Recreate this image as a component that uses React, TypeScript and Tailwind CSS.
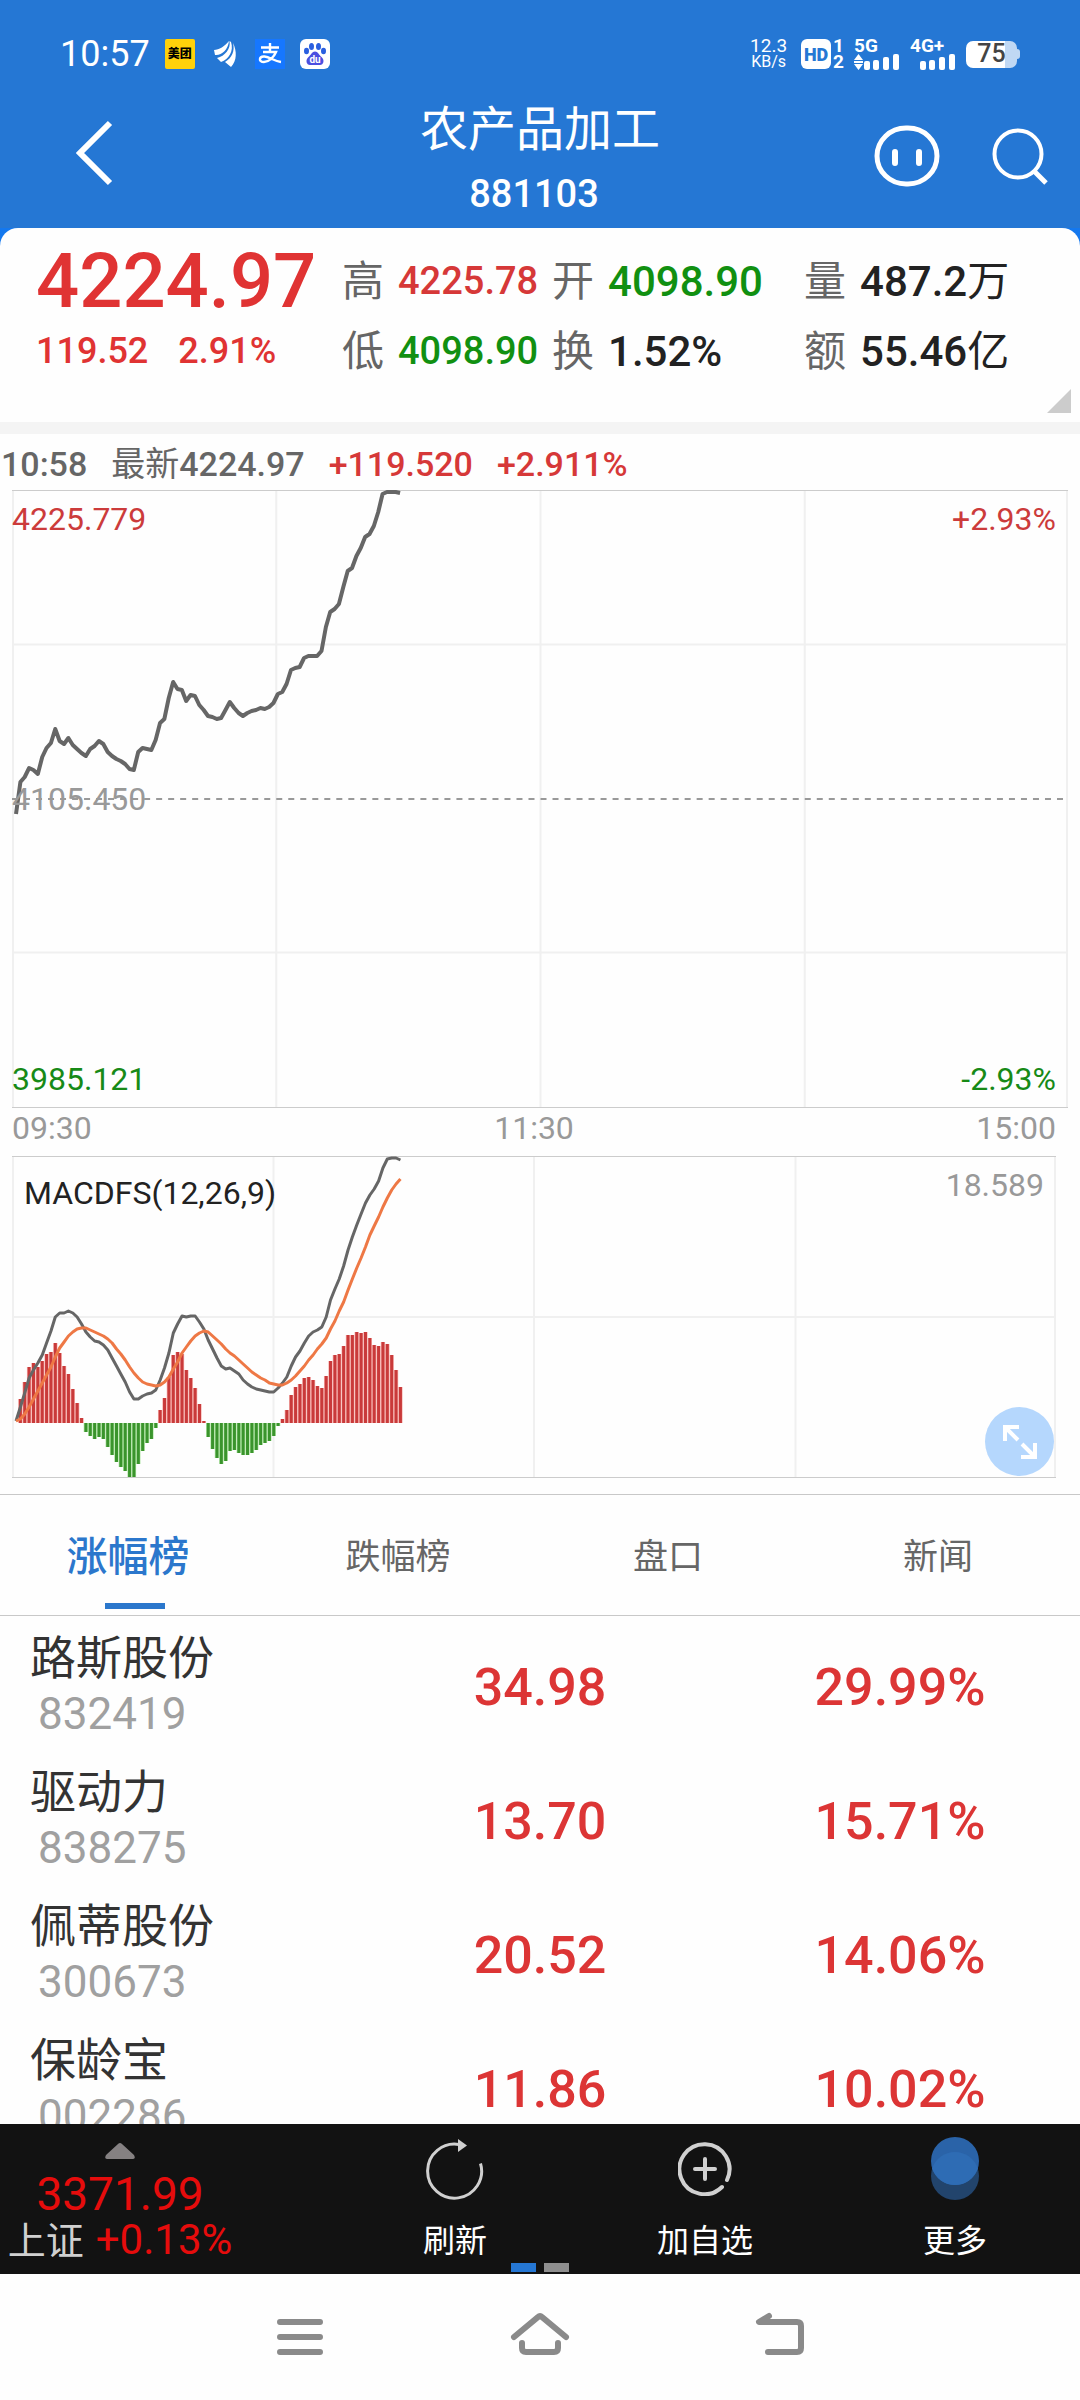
import clsx from "clsx";
import type { ReactNode } from "react";

type Stock = { name: string; code: string; price: string; change: string };

const STOCKS: Stock[] = [
  { name: "路斯股份", code: "832419", price: "34.98", change: "29.99%" },
  { name: "驱动力", code: "838275", price: "13.70", change: "15.71%" },
  { name: "佩蒂股份", code: "300673", price: "20.52", change: "14.06%" },
  { name: "保龄宝", code: "002286", price: "11.86", change: "10.02%" },
];

const TABS = ["涨幅榜", "跌幅榜", "盘口", "新闻"];

// one value per minute since the open, in plot units from the top
const PRICE = [
  324, 292, 287, 278, 280, 284, 267, 258, 253, 239, 251, 254, 248, 255, 259, 263, 266, 259, 256, 251,
  254, 262, 266, 269, 271, 274, 279, 280, 262, 258, 259, 260, 250, 233, 229, 208, 192, 199, 200, 211,
  205, 206, 215, 220, 226, 227, 229, 228, 220, 212, 218, 223, 226, 223, 221, 220, 218, 219, 217, 213,
  204, 202, 194, 180, 178, 177, 168, 166, 166, 166, 161, 137, 122, 119, 114, 97, 81, 78, 66, 58,
  47, 44, 36, 22, 4, 2, 2, 2, 3,
];

const DIF = [
  265, 251, 237, 222, 214, 207, 199, 187, 175, 161, 157, 157, 155, 157, 161, 168, 176, 181, 185, 186,
  189, 194, 202, 210, 218, 226, 236, 243, 243, 240, 238, 237, 234, 224, 212, 197, 177, 168, 160, 161,
  160, 160, 166, 173, 184, 193, 202, 210, 213, 212, 215, 218, 224, 228, 231, 233, 234, 235, 236, 236,
  232, 227, 221, 210, 201, 195, 187, 180, 176, 174, 171, 161, 144, 133, 123, 110, 94, 81, 69, 58,
  47, 39, 33, 25, 12, 3, 2, 2, 4,
];

const DEA = [
  265, 263, 258, 251, 243, 235, 227, 219, 211, 201, 192, 186, 180, 176, 173, 172, 172, 174, 176, 178,
  180, 183, 187, 193, 198, 204, 211, 217, 222, 226, 228, 229, 230, 229, 226, 221, 213, 206, 197, 191,
  185, 180, 177, 175, 176, 180, 184, 188, 193, 197, 200, 204, 208, 212, 216, 219, 222, 224, 227, 228,
  229, 229, 227, 224, 220, 215, 210, 204, 199, 193, 188, 182, 173, 165, 155, 146, 134, 123, 112, 102,
  91, 79, 70, 61, 51, 42, 34, 28, 23,
];

const BARS = [
  0, 24, 41, 56, 60, 56, 62, 69, 71, 80, 70, 57, 49, 34, 20, 5, -9, -13, -16, -14,
  -16, -24, -32, -39, -44, -48, -54, -54, -41, -28, -20, -16, -5, 13, 25, 46, 68, 71, 69, 53,
  45, 35, 19, 2, -14, -26, -35, -41, -38, -28, -27, -30, -32, -32, -30, -27, -22, -20, -18, -13,
  -3, 4, 13, 28, 36, 39, 45, 46, 43, 37, 35, 47, 62, 68, 69, 77, 88, 88, 91, 90,
  91, 85, 78, 77, 81, 79, 68, 53, 36,
];

const STEP = 4.36;
const MACD_ZERO = 267;

const xAt = (i: number) => 4 + i * STEP;
const toPoints = (values: number[]) => values.map((y, i) => `${xAt(i).toFixed(1)},${y}`).join(" ");

export default function App() {
  return (
    <div className="flex h-screen flex-col overflow-hidden bg-[#fefefe] font-[Roboto,'Noto_Sans_CJK_SC',sans-serif] text-[#222]">
      <header className="bg-[#2577d4] text-white">
        <StatusBar />
        <TitleBar />
      </header>
      <QuotePanel />
      <TickLine />
      <PriceChart />
      <MacdChart />
      <RankTabs />
      <StockList />
      <BottomBar />
      <NavBar />
    </div>
  );
}

function StatusBar() {
  return (
    <div className="flex h-[92px] items-center justify-between pt-4 pr-[60px] pl-[60px]">
      <div className="flex items-center">
        <span className="mr-[15px] text-[36px] leading-[40px]">10:57</span>
        <span className="mr-[18px] flex h-[30px] w-[30px] items-center justify-center rounded-[2px] bg-[#ffd10a] text-[12px] font-black whitespace-nowrap text-black">
          美团
        </span>
        <svg className="mr-[18px] h-[26px] w-[24px]" viewBox="0 0 24 26" fill="#fff">
          <path d="M1 9C6 9 12 5 16 0C15 9 8 15 2 14Z" />
          <path d="M16.500 0C18 8 12 15 4 17L8 21C16 18 21 10 18 1Z" />
          <path d="M20 2C22 10 19 17 12 21L18 26C24 20 24 10 20 2Z" />
        </svg>
        <span className="mr-[15px] flex h-[30px] w-[30px] items-center justify-center bg-[#1677ff]">
          <svg className="h-[24px] w-[24px]" viewBox="0 0 24 24" fill="none" stroke="#fff" strokeWidth="2.4">
            <path d="M3 5.500H21M12 1V9.500M5 10H18C16 15 11 20 6 20C0 20 1 14 6.500 14.500C12 15 16 19 23 20" />
          </svg>
        </span>
        <span className="flex h-[30px] w-[30px] items-center justify-center rounded-md bg-white">
          <BaiduPaw />
        </span>
      </div>
      <div className="flex items-center">
        <div className="mr-[14px] text-center leading-[16px]">
          <div className="text-[19px]">12.3</div>
          <div className="text-[16px]">KB/s</div>
        </div>
        <span className="flex h-[30px] w-[30px] items-center justify-center rounded-[6px] bg-white text-[18px] font-black text-[#2577d4]">
          HD
        </span>
        <div className="mr-[10px] ml-[2px] text-[19px] leading-[16px] font-bold">
          <div>1</div>
          <div>2</div>
        </div>
        <Signal label="5G" data />
        <Signal label="4G+" />
        <div className="flex items-center">
          <div className="flex h-[27px] w-[51px] items-center justify-center rounded-[7px] bg-[linear-gradient(90deg,#fff_76%,#c0d8f4_76%)] text-[25px] font-medium text-[#444]">
            75
          </div>
          <div className="h-[10px] w-[3px] rounded-r-sm bg-[#c0d8f4]" />
        </div>
      </div>
    </div>
  );
}

function Signal({ label, data }: { label: string; data?: boolean }) {
  return (
    <div className="mr-[11px] w-[45px]">
      <div className="h-[14px] text-[19px] leading-[14px] font-bold">{label}</div>
      <svg className="h-[17px] w-[45px]" viewBox="0 0 45 17" fill="#fff">
        {data && <path d="M0 7L4.500 1L9 7ZM0 11L4.500 17L9 11ZM0 8H9V10H0Z" />}
        <rect x="10" y="8" width="6" height="9" rx="2" />
        <rect x="19" y="7" width="6" height="10" rx="2" />
        <rect x="29" y="4" width="6" height="13" rx="2" />
        <rect x="39" y="1" width="6" height="16" rx="2" />
      </svg>
    </div>
  );
}

function BaiduPaw() {
  return (
    <svg className="h-[24px] w-[24px]" viewBox="0 0 24 24">
      <g fill="#2a5fe0">
        <ellipse cx="3.500" cy="9" rx="2.500" ry="3.200" />
        <ellipse cx="8.500" cy="4.500" rx="2.500" ry="3.500" />
        <ellipse cx="15.500" cy="4.500" rx="2.500" ry="3.500" />
        <ellipse cx="20.500" cy="9" rx="2.500" ry="3.200" />
      </g>
      <path d="M12 9.500C15 9.500 16 13 18.500 15C22 18 20.500 23 17 23H7C3.500 23 2 18 5.500 15C8 13 9 9.500 12 9.500Z" fill="#4b4fe0" />
      <text x="12" y="21" textAnchor="middle" fill="#fff" className="text-[10px] font-bold">
        du
      </text>
    </svg>
  );
}

function TitleBar() {
  return (
    <div className="grid h-[136px] grid-cols-[1fr_auto_1fr]">
      <button type="button" aria-label="返回" className="justify-self-start pb-[14px] pl-[76px]">
        <svg className="h-[66px] w-[38px]" viewBox="0 0 38 66" fill="none" stroke="#fff" strokeWidth="6">
          <path d="M34 3L4 33L34 63" />
        </svg>
      </button>
      <div className="flex flex-col items-center pt-[6px]">
        <h1 className="text-[48px] leading-[64px]">农产品加工</h1>
        <p className="pr-3 text-[38px] leading-[64px] font-medium">881103</p>
      </div>
      <div className="flex items-center justify-end gap-[52px] pr-8 pb-2">
        <button type="button" aria-label="智能助手">
          <svg className="h-[62px] w-[66px]" viewBox="0 0 66 62" fill="none" stroke="#fff" strokeWidth="5">
            <rect x="3" y="3" width="60" height="56" rx="29" />
            <path d="M21 27V38M45 27V38" strokeWidth="6" strokeLinecap="round" />
          </svg>
        </button>
        <button type="button" aria-label="搜索">
          <svg className="h-[58px] w-[56px]" viewBox="0 0 56 58" fill="none" stroke="#fff" strokeWidth="4">
            <circle cx="26" cy="27" r="23.500" />
            <path d="M42 44L54 56" strokeWidth="5" />
          </svg>
        </button>
      </div>
    </div>
  );
}

function QuoteItem({ label, className, children }: { label: string; className: string; children: ReactNode }) {
  return (
    <div className="flex h-[70px] items-center gap-[14px] whitespace-nowrap">
      <dt className="text-[42px] text-[#666]">{label}</dt>
      <dd className={clsx("font-medium", className)}>{children}</dd>
    </div>
  );
}

function QuotePanel() {
  return (
    <section className="bg-[#1478ee]">
      <div className="relative rounded-t-[18px] bg-[#fefefe] pt-[18px] pb-[36px]">
        <div className="grid grid-cols-[306fr_210fr_252fr_276fr] pl-[36px]">
          <div className="text-[#e03333]">
            <div className="flex h-[70px] items-center text-[76px] font-medium">4224.97</div>
            <div className="flex h-[70px] items-center gap-[30px] text-[36px] font-medium">
              <span>119.52</span>
              <span>2.91%</span>
            </div>
          </div>
          <dl>
            <QuoteItem label="高" className="text-[38px] text-[#d63838]">4225.78</QuoteItem>
            <QuoteItem label="低" className="text-[38px] text-[#119011]">4098.90</QuoteItem>
          </dl>
          <dl>
            <QuoteItem label="开" className="text-[42px] text-[#119011]">4098.90</QuoteItem>
            <QuoteItem label="换" className="text-[42px]">1.52%</QuoteItem>
          </dl>
          <dl>
            <QuoteItem label="量" className="text-[42px]">
              487.2<span className="font-normal">万</span>
            </QuoteItem>
            <QuoteItem label="额" className="text-[42px]">
              55.46<span className="font-normal">亿</span>
            </QuoteItem>
          </dl>
        </div>
        <div className="absolute right-[9px] bottom-[9px] h-6 w-6 bg-[#ccc] [clip-path:polygon(100%_0,100%_100%,0_100%)]" />
      </div>
      <div className="h-3 bg-[#f4f4f4]" />
    </section>
  );
}

function TickLine() {
  return (
    <div className="flex h-14 shrink-0 items-center gap-6 pt-1 pl-px text-[34px] font-medium whitespace-nowrap text-[#666]">
      <span>10:58</span>
      <span>
        <span className="font-normal">最新</span>4224.97
      </span>
      <span className="text-[#d63838]">+119.520</span>
      <span className="text-[#d63838]">+2.911%</span>
    </div>
  );
}

function PriceChart() {
  return (
    <section className="pr-3 pl-3">
      <div className="relative h-[618px]">
        <svg className="h-full w-full" viewBox="0 0 1055 618" preserveAspectRatio="none" fill="none">
          <path d="M1 0V618M264 0V618M528 0V618M792 0V618M1054 0V618M0 154.500H1055M0 462.500H1055" stroke="#f0f0f0" strokeWidth="2" />
          <path d="M0 0.500H1055M0 617.500H1055" stroke="#ccc" />
          <polyline points={toPoints(PRICE)} stroke="#666" strokeWidth="4" strokeLinejoin="round" />
          <path d="M0 309H1055" stroke="#999" strokeWidth="2" strokeDasharray="6 6" />
        </svg>
        <div className="absolute inset-0 flex flex-col justify-between text-[32px] leading-[58px]">
          <div className="flex justify-between pr-3 text-[#cc3b3b]">
            <span>4225.779</span>
            <span>+2.93%</span>
          </div>
          <div className="text-[#999]">4105.450</div>
          <div className="flex justify-between pr-3 text-[#178a17]">
            <span>3985.121</span>
            <span>-2.93%</span>
          </div>
        </div>
      </div>
      <div className="flex justify-between pr-3 pb-2 text-[32px] leading-[40px] text-[#999]">
        <span>09:30</span>
        <span>11:30</span>
        <span>15:00</span>
      </div>
    </section>
  );
}

function MacdChart() {
  return (
    <section className="pr-6 pb-4 pl-3">
      <div className="relative h-[322px]">
        <svg className="h-full w-full" viewBox="0 0 1042 322" preserveAspectRatio="none" fill="none">
          <path d="M1 0V322M261 0V322M521 0V322M782 0V322M1041 0V322M0 161H1042" stroke="#f0f0f0" strokeWidth="2" />
          <path d="M0 0.500H1042M0 321.500H1042" stroke="#ccc" />
          {BARS.map((value, i) => (
            <g key={i}>
              <rect
                x={xAt(i) - 2.2}
                y={value > 0 ? MACD_ZERO - value : MACD_ZERO}
                width={STEP}
                height={Math.abs(value)}
                fill={value > 0 ? "#f6b4b0" : "#b4e6a8"}
              />
              <rect
                x={xAt(i) - 1.5}
                y={value > 0 ? MACD_ZERO - value : MACD_ZERO}
                width="3"
                height={Math.abs(value)}
                fill={value > 0 ? "#c93a3a" : "#3a942c"}
              />
            </g>
          ))}
          <polyline points={toPoints(DIF)} stroke="#666" strokeWidth="3" strokeLinejoin="round" />
          <polyline points={toPoints(DEA)} stroke="#ee7845" strokeWidth="3" strokeLinejoin="round" />
        </svg>
        <div className="absolute inset-x-0 top-0 flex justify-between pr-3 pl-3 text-[32px]">
          <span className="pt-2 leading-[58px]">MACDFS(12,26,9)</span>
          <span className="leading-[58px] text-[#999]">18.589</span>
        </div>
        <button
          type="button"
          aria-label="全屏"
          className="absolute right-[2px] bottom-[2px] flex h-[69px] w-[69px] items-center justify-center rounded-full bg-[#b5d7fd]"
        >
          <svg className="h-[36px] w-[36px]" viewBox="0 0 36 36" fill="none" stroke="#fff" strokeWidth="4">
            <path d="M17 3H3V17M3 3L16 16M33 19V33H19M20 20L33 33" />
          </svg>
        </button>
      </div>
    </section>
  );
}

function RankTabs() {
  return (
    <div role="tablist" className="grid h-[122px] shrink-0 grid-cols-4 border-y border-[#c8c8c8]">
      {TABS.map((tab, i) => (
        <button
          key={tab}
          type="button"
          role="tab"
          aria-selected={i === 0}
          className={clsx(
            "relative pt-[6px] pr-[14px]",
            i === 0 ? "text-[41px] font-medium text-[#2b77cc]" : "text-[35px] text-[#666]",
          )}
        >
          {tab}
          {i === 0 && <span className="absolute bottom-[6px] left-1/2 h-[6px] w-[60px] -translate-x-1/2 bg-[#2b77cc]" />}
        </button>
      ))}
    </div>
  );
}

function StockList() {
  return (
    <div className="min-h-0 flex-1 overflow-hidden pt-[3px]">
      <table className="w-full table-fixed">
        <tbody>
          {STOCKS.map((stock) => (
            <tr key={stock.code} className="h-[134px]">
              <th scope="row" className="pl-[30px] text-left font-normal">
                <div className="text-[46px] leading-[56px] text-[#333]">{stock.name}</div>
                <div className="pl-2 text-[44px] leading-[56px] text-[#a0a0a0]">{stock.code}</div>
              </th>
              <td className="pt-1 text-center text-[52px] font-medium text-[#dc3535]">{stock.price}</td>
              <td className="pt-1 text-center text-[52px] font-medium text-[#dc3535]">{stock.change}</td>
            </tr>
          ))}
        </tbody>
      </table>
    </div>
  );
}

function ToolButton({ label, children }: { label: string; children: ReactNode }) {
  return (
    <button type="button" className="flex flex-col items-center pt-3 text-[32px] text-white">
      <span className="flex h-[66px] items-center">{children}</span>
      <span className="mt-[15px] leading-[48px]">{label}</span>
    </button>
  );
}

function BottomBar() {
  return (
    <div className="relative grid h-[150px] shrink-0 grid-cols-[330fr_250fr_250fr_250fr] bg-[#121212]">
      <button type="button" className="flex w-[240px] flex-col items-center pt-[19px] whitespace-nowrap text-[#e60c0c]">
        <svg className="h-[16px] w-[30px]" viewBox="0 0 30 16" fill="#858182">
          <path d="M13 1Q15 -1 17 1L29 12Q31 16 28 16H2Q-1 16 1 12Z" />
        </svg>
        <span className="mt-[11px] text-[46px] leading-[48px]">3371.99</span>
        <span className="text-[42px] leading-[44px]">
          <span className="mr-3 text-[38px] text-[#d0d0d0]">上证</span>
          +0.13%
        </span>
      </button>
      <ToolButton label="刷新">
        <svg className="h-[62px] w-[58px]" viewBox="0 0 58 62" fill="none" stroke="#d0d0d0" strokeWidth="3">
          <path d="M54.500 25.500A27 27 0 1 1 33 6.500" />
          <path d="M32 1L41 7.500L32 14Z" fill="#d0d0d0" stroke="none" />
        </svg>
      </ToolButton>
      <ToolButton label="加自选">
        <svg className="h-[54px] w-[54px]" viewBox="0 0 54 54" fill="none" stroke="#d0d0d0" strokeWidth="4" strokeLinecap="round">
          <path d="M49 38A25 25 0 1 0 44 45" />
          <path d="M27 17V37M17 27H37" />
        </svg>
      </ToolButton>
      <ToolButton label="更多">
        <svg className="h-[64px] w-[48px]" viewBox="0 0 48 64">
          <circle cx="24" cy="39" r="24" fill="#22446c" />
          <circle cx="24" cy="24" r="24" fill="#2a63a8" />
          <path d="M1.200 31.500A24 24 0 0 1 46.800 31.500A24 24 0 0 1 1.200 31.500Z" fill="#2e6cb4" />
        </svg>
      </ToolButton>
      <div className="absolute bottom-[2px] left-1/2 flex -translate-x-1/2 gap-2">
        <span className="h-[9px] w-[25px] bg-[#2577d4]" />
        <span className="h-[9px] w-[25px] bg-[#8f8f8f]" />
      </div>
    </div>
  );
}

function NavBar() {
  return (
    <nav className="mx-auto grid h-[126px] w-2/3 shrink-0 grid-cols-3">
      <button type="button" aria-label="最近任务" className="flex items-center justify-center">
        <svg className="h-[44px] w-[46px]" viewBox="0 0 46 44" stroke="#8a8a8a" strokeWidth="6" strokeLinecap="round">
          <path d="M3 7H43M3 22H43M3 37H43" />
        </svg>
      </button>
      <button type="button" aria-label="主屏幕" className="flex items-center justify-center">
        <svg className="h-[50px] w-[60px]" viewBox="0 0 60 50" fill="none" stroke="#8a8a8a" strokeWidth="6" strokeLinecap="round">
          <path d="M4 25L28 5Q30 3 32 5L56 25M12 31V36Q12 40 16 40H44Q48 40 48 36V31" />
        </svg>
      </button>
      <button type="button" aria-label="返回上一级" className="flex items-center justify-center">
        <svg className="h-[50px] w-[50px]" viewBox="0 0 50 50" fill="none" stroke="#8a8a8a" strokeWidth="6" strokeLinecap="round" strokeLinejoin="round">
          <path d="M14 4L4 10H42Q46 10 46 14V36Q46 40 42 40H13" />
        </svg>
      </button>
    </nav>
  );
}
